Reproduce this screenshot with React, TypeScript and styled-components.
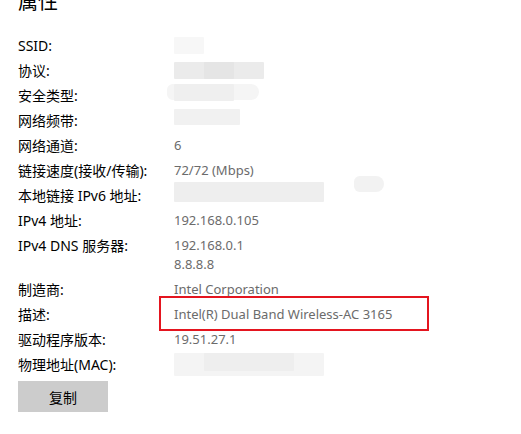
import React from "react";
import styled, { createGlobalStyle } from "styled-components";

const GlobalStyle = createGlobalStyle`
  html, body {
    margin: 0;
    padding: 0;
    background: #ffffff;
    overflow: hidden;
  }
  body {
    font-family: "Noto Sans", "Noto Sans CJK SC", sans-serif;
  }
`;

const Page = styled.div`
  width: 521px;
  height: 434px;
  padding: 0 0 0 18px;
  box-sizing: border-box;
  overflow: hidden;
`;

const Title = styled.h2`
  margin: -13px 0 21px 0;
  font-size: 20px;
  font-weight: 400;
  line-height: 28px;
  color: #000;
  font-family: "Noto Sans CJK SC", sans-serif;
`;

const Grid = styled.div`
  display: grid;
  grid-template-columns: 156px 1fr;
  row-gap: 6px;
  font-size: 13px;
  line-height: 19px;
`;

const Label = styled.div`
  color: #000;
  font-size: 14px;
  white-space: nowrap;
`;

const Value = styled.div`
  position: relative;
  color: #6b6b6b;
  white-space: nowrap;
`;

const Smudge = styled.div<{ w: number; h: number; x?: number; y?: number; tone?: string; round?: boolean }>`
  position: absolute;
  left: ${p => p.x ?? 0}px;
  top: ${p => p.y ?? 0}px;
  width: ${p => p.w}px;
  height: ${p => p.h}px;
  background: ${p => p.tone ?? "#efefef"};
  border-radius: ${p => (p.round ? "10px 14px 14px 10px" : "1px")};
`;

const Highlight = styled.div`
  position: absolute;
  left: -15px;
  top: -9px;
  width: 270px;
  height: 35px;
  border: 2px solid #e4151f;
  box-sizing: border-box;
  pointer-events: none;
`;

const CopyButton = styled.button`
  margin-top: 7px;
  width: 90px;
  height: 31px;
  border: none;
  background: #cccccc;
  color: #000;
  font-family: "Noto Sans CJK SC", sans-serif;
  font-size: 14px;
  padding: 0;
  cursor: pointer;
`;

export default function App() {
  return (
    <Page>
      <GlobalStyle />
      <Title>属性</Title>
      <Grid>
        <Label>SSID:</Label>
        <Value>
          <Smudge w={30} h={17} y={1} tone="#f7f7f7" />
          &nbsp;
        </Value>

        <Label>协议:</Label>
        <Value>
          <Smudge w={90} h={17} y={1} tone="#ebebeb" />
          <Smudge w={30} h={17} x={30} y={1} tone="#e5e5e5" />
          &nbsp;
        </Value>

        <Label>安全类型:</Label>
        <Value>
          <Smudge w={92} h={16} x={-7} y={-2} tone="#f5f5f5" round />
          <Smudge w={60} h={17} x={0} y={-2} tone="#efefef" />
          &nbsp;
        </Value>

        <Label>网络频带:</Label>
        <Value>
          <Smudge w={66} h={16} x={0} y={-2} tone="#f1f1f1" />
          &nbsp;
        </Value>

        <Label>网络通道:</Label>
        <Value>6</Value>

        <Label>链接速度(接收/传输):</Label>
        <Value>72/72 (Mbps)</Value>

        <Label>本地链接 IPv6 地址:</Label>
        <Value>
          <Smudge w={150} h={20} x={0} y={-4} tone="#eeeeee" />
          <Smudge w={30} h={16} x={180} y={-10} tone="#f2f2f2" round />
          &nbsp;
        </Value>

        <Label>IPv4 地址:</Label>
        <Value>192.168.0.105</Value>

        <Label>IPv4 DNS 服务器:</Label>
        <Value>
          192.168.0.1
          <br />
          8.8.8.8
        </Value>

        <Label>制造商:</Label>
        <Value>Intel Corporation</Value>

        <Label>描述:</Label>
        <Value>
          Intel(R) Dual Band Wireless-AC 3165
          <Highlight />
        </Value>

        <Label>驱动程序版本:</Label>
        <Value>19.51.27.1</Value>

        <Label>物理地址(MAC):</Label>
        <Value>
          <Smudge w={150} h={23} x={0} y={-2} tone="#f4f4f4" />
          <Smudge w={90} h={18} x={30} y={-2} tone="#eeeeee" />
          &nbsp;
        </Value>
      </Grid>
      <CopyButton>复制</CopyButton>
    </Page>
  );
}
